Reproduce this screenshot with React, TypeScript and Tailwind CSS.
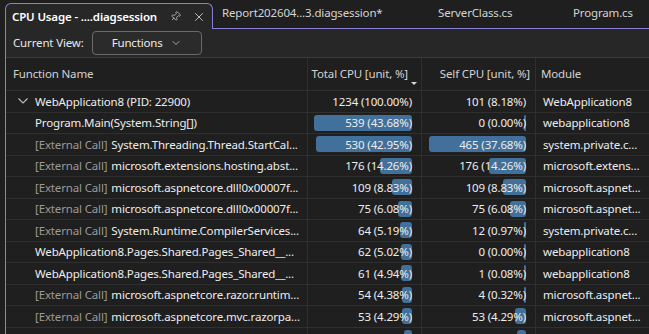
import { ChevronDown, Pin, X } from "lucide-react";

interface Row {
  ext: boolean;
  name: string;
  total: number;
  totalPct: string;
  self: number;
  selfPct: string;
  module: string;
  root?: boolean;
}

const rows: Row[] = [
  { ext: false, name: "WebApplication8 (PID: 22900)", total: 1234, totalPct: "100.00%", self: 101, selfPct: "8.18%", module: "WebApplication8", root: true },
  { ext: false, name: "Program.Main(System.String[])", total: 539, totalPct: "43.68%", self: 0, selfPct: "0.00%", module: "webapplication8" },
  { ext: true, name: "System.Threading.Thread.StartCal...", total: 530, totalPct: "42.95%", self: 465, selfPct: "37.68%", module: "system.private.c..." },
  { ext: true, name: "microsoft.extensions.hosting.abst...", total: 176, totalPct: "14.26%", self: 176, selfPct: "14.26%", module: "microsoft.extens..." },
  { ext: true, name: "microsoft.aspnetcore.dll!0x00007f...", total: 109, totalPct: "8.83%", self: 109, selfPct: "8.83%", module: "microsoft.aspnet..." },
  { ext: true, name: "microsoft.aspnetcore.dll!0x00007f...", total: 75, totalPct: "6.08%", self: 75, selfPct: "6.08%", module: "microsoft.aspnet..." },
  { ext: true, name: "System.Runtime.CompilerServices...", total: 64, totalPct: "5.19%", self: 12, selfPct: "0.97%", module: "system.private.c..." },
  { ext: false, name: "WebApplication8.Pages.Shared.Pages_Shared__...", total: 62, totalPct: "5.02%", self: 0, selfPct: "0.00%", module: "webapplication8" },
  { ext: false, name: "WebApplication8.Pages.Shared.Pages_Shared__...", total: 61, totalPct: "4.94%", self: 1, selfPct: "0.08%", module: "webapplication8" },
  { ext: true, name: "microsoft.aspnetcore.razor.runtim...", total: 54, totalPct: "4.38%", self: 4, selfPct: "0.32%", module: "microsoft.aspnet..." },
  { ext: true, name: "microsoft.aspnetcore.mvc.razorpa...", total: 53, totalPct: "4.29%", self: 53, selfPct: "4.29%", module: "microsoft.aspnet..." },
  { ext: true, name: "System.Diagnostics.Tracing.Eve...", total: 45, totalPct: "3.65%", self: 45, selfPct: "3.65%", module: "system.private.c..." },
];

function Bar({ width }: { width: number }) {
  return (
    <div
      className="absolute right-[9px] top-[2px] h-[16px] rounded-[3px] bg-[#41709a]"
      style={{ width: Math.max(2, width) }}
    />
  );
}

export default function App() {
  return (
    <div className="h-[334px] w-[649px] overflow-hidden whitespace-nowrap bg-[#1f1f1f] font-['Noto_Sans',sans-serif] text-[11.5px] tracking-[-0.15px] text-[#ededed]">
      {/* tab strip */}
      <div className="flex h-[29px] items-end pl-[5px]">
        <div className="flex h-[26px] w-[208px] shrink-0 items-center rounded-t-[6px] border border-b-0 border-[#8a7fd6] bg-[#272727] pl-[6px]">
          <span className="font-semibold text-white">CPU Usage - ....diagsession</span>
          <Pin size={11} strokeWidth={1.6} className="ml-[13px] shrink-0 rotate-45 text-[#cfcfcf]" />
          <X size={14} strokeWidth={1.4} className="ml-[11px] shrink-0 text-[#dedede]" />
        </div>
        <div className="flex h-full flex-1 items-center border-b border-[#8a7fd6] pb-[2px] text-[#d4d4d4]">
          <div className="w-[216px] shrink-0 pl-[9px]">Report202604...3.diagsession*</div>
          <div className="w-[135px] shrink-0 pl-[9px]">ServerClass.cs</div>
          <div className="pl-[9px]">Program.cs</div>
        </div>
      </div>

      <div className="ml-[5px] border-l border-[#8a7fd6]">
        {/* toolbar */}
        <div className="flex h-[29px] items-center border-b border-[#3a3a3a] bg-[#272727] pl-[7px]">
          <span className="text-[#e8e8e8]">Current View:</span>
          <div className="ml-[8px] flex h-[24px] w-[110px] items-center justify-center gap-[7px] rounded-[4px] border border-[#6a6a6a] bg-[#2b2b2b]">
            <span>Functions</span>
            <ChevronDown size={12} strokeWidth={1.5} className="text-[#cfcfcf]" />
          </div>
        </div>

        {/* header */}
        <div className="flex h-[33px] border-b border-[#2f2f2f] text-[#d2d2d2]">
          <div className="flex w-[302px] shrink-0 items-center border-r border-[#2f2f2f] pl-[7px]">Function Name</div>
          <div className="relative flex w-[114px] shrink-0 items-center justify-end border-r border-[#2f2f2f] pr-[13px]">
            Total CPU [unit, %]
            <svg className="absolute right-[4px] top-[24px]" width="6" height="3" viewBox="0 0 6 3">
              <path d="M0 0 L6 0 L3 3 Z" fill="#d8d8d8" />
            </svg>
          </div>
          <div className="flex w-[114px] shrink-0 items-center justify-end border-r border-[#2f2f2f] pr-[5px]">Self CPU [unit, %]</div>
          <div className="flex flex-1 items-center pl-[5px]">Module</div>
        </div>

        {/* rows */}
        {rows.map((r, i) => (
          <div key={i} className="flex h-[21.5px] border-b border-[#2f2f2f]">
            <div className="flex w-[302px] shrink-0 items-center overflow-hidden border-r border-[#2f2f2f] pl-[12px]">
              <div className="flex w-[17px] shrink-0 items-center">
                {r.root && (
                  <svg width="10" height="6" viewBox="0 0 10 6">
                    <path d="M0.5 0.5 L5 5 L9.5 0.5" fill="none" stroke="#bdbdbd" strokeWidth="1.1" />
                  </svg>
                )}
              </div>
              {r.ext && <span className="mr-[4px] text-[#9a9a9a]">[External Call]</span>}
              <span>{r.name}</span>
            </div>
            <div className="relative flex w-[114px] shrink-0 items-center justify-end border-r border-[#2f2f2f] pr-[9px]">
              {!r.root && <Bar width={(r.total / 539) * 98} />}
              <span className="relative">{r.total} ({r.totalPct})</span>
            </div>
            <div className="relative flex w-[114px] shrink-0 items-center justify-end border-r border-[#2f2f2f] pr-[9px]">
              {!r.root && <Bar width={(r.self / 465) * 97} />}
              <span className="relative">{r.self} ({r.selfPct})</span>
            </div>
            <div className="flex flex-1 items-center pl-[7px]">{r.module}</div>
          </div>
        ))}
      </div>
    </div>
  );
}
